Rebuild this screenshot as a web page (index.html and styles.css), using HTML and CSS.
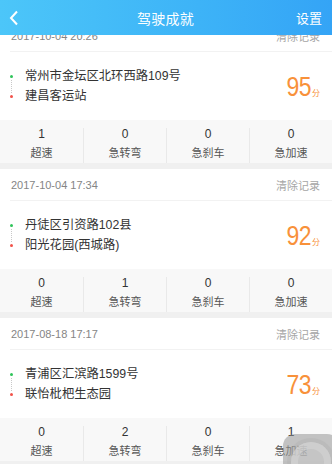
FILE: index.html
```html
<!DOCTYPE html>
<html lang="zh">
<head>
<meta charset="utf-8">
<title>驾驶成就</title>
<link rel="stylesheet" href="styles.css">
</head>
<body>
<div class="app">
  <header class="nav">
    <span class="back">
      <svg width="10" height="16" viewBox="0 0 10 16"><path d="M8 1.5 L2 8 L8 14.5" fill="none" stroke="#fff" stroke-width="2"/></svg>
    </span>
    <span class="title">驾驶成就</span>
    <span class="setting">设置</span>
  </header>
  <div class="list">
    <section class="card">
      <div class="card-head"><span class="date">2017-10-04 20:26</span><span class="clear">清除记录</span></div>
      <div class="route">
        <div class="marks"><i class="dot start"></i><i class="dash"></i><i class="dot end"></i></div>
        <div class="places"><div>常州市金坛区北环西路109号</div><div>建昌客运站</div></div>
        <div class="score"><span class="val">95</span><span class="unit">分</span></div>
      </div>
      <div class="stats">
        <div class="stat"><span class="num">1</span><span class="lbl">超速</span></div>
        <div class="stat"><span class="num">0</span><span class="lbl">急转弯</span></div>
        <div class="stat"><span class="num">0</span><span class="lbl">急刹车</span></div>
        <div class="stat"><span class="num">0</span><span class="lbl">急加速</span></div>
      </div>
    </section>
    <section class="card">
      <div class="card-head"><span class="date">2017-10-04 17:34</span><span class="clear">清除记录</span></div>
      <div class="route">
        <div class="marks"><i class="dot start"></i><i class="dash"></i><i class="dot end"></i></div>
        <div class="places"><div>丹徒区引资路102县</div><div>阳光花园(西城路)</div></div>
        <div class="score"><span class="val">92</span><span class="unit">分</span></div>
      </div>
      <div class="stats">
        <div class="stat"><span class="num">0</span><span class="lbl">超速</span></div>
        <div class="stat"><span class="num">1</span><span class="lbl">急转弯</span></div>
        <div class="stat"><span class="num">0</span><span class="lbl">急刹车</span></div>
        <div class="stat"><span class="num">0</span><span class="lbl">急加速</span></div>
      </div>
    </section>
    <section class="card">
      <div class="card-head"><span class="date">2017-08-18 17:17</span><span class="clear">清除记录</span></div>
      <div class="route">
        <div class="marks"><i class="dot start"></i><i class="dash"></i><i class="dot end"></i></div>
        <div class="places"><div>青浦区汇滨路1599号</div><div>联怡枇杷生态园</div></div>
        <div class="score"><span class="val">73</span><span class="unit">分</span></div>
      </div>
      <div class="stats">
        <div class="stat"><span class="num">0</span><span class="lbl">超速</span></div>
        <div class="stat"><span class="num">2</span><span class="lbl">急转弯</span></div>
        <div class="stat"><span class="num">0</span><span class="lbl">急刹车</span></div>
        <div class="stat"><span class="num">1</span><span class="lbl">急加速</span></div>
      </div>
    </section>
  </div>
  <div class="assist"><span class="ring"></span></div>
</div>
</body>
</html>
```
FILE: styles.css
```css
html, body {
  margin: 0;
  padding: 0;
}
body {
  font-family: "Liberation Sans", "Noto Sans CJK SC", sans-serif;
  background: #f0f0f0;
}
.app {
  position: relative;
  width: 332px;
  height: 464px;
  overflow: hidden;
  background: #f0f0f0;
}
.nav {
  position: relative;
  z-index: 2;
  height: 35px;
  display: flex;
  align-items: center;
  justify-content: space-between;
  padding: 0 10px 0 9px;
  background: linear-gradient(90deg, #4cc6f9 0%, #3db3f7 60%, #34a4f6 100%);
  color: #fff;
}
.back {
  width: 40px;
  display: flex;
  align-items: center;
  height: 16px;
}
.title {
  font-size: 14px;
  letter-spacing: 0.3px;
}
.setting {
  width: 40px;
  text-align: right;
  font-size: 13px;
}
.list {
  margin-top: -15px;
}
.card {
  background: #fff;
  margin-bottom: 6px;
}
.card-head {
  height: 31px;
  margin-left: 10px;
  padding: 0 12px 0 1px;
  display: flex;
  align-items: center;
  justify-content: space-between;
  border-bottom: 1px solid #f2f2f2;
}
.date {
  font-size: 11px;
  color: #858585;
}
.clear {
  font-size: 11px;
  color: #a6a6a6;
  font-family: "Noto Sans CJK SC", sans-serif;
}
.route {
  height: 68px;
  display: flex;
  align-items: center;
  padding: 0 12px 0 10px;
}
.marks {
  width: 3px;
  display: flex;
  flex-direction: column;
  align-items: center;
  margin-right: 12px;
}
.dot {
  display: block;
  width: 3px;
  height: 3px;
  border-radius: 50%;
}
.dot.start { background: #2fc45a; }
.dot.end { background: #f2524a; }
.dash {
  display: block;
  height: 13px;
  margin: 2px 0;
  border-left: 1px dotted #c8c8c8;
}
.places {
  flex: 1;
  font-size: 12.3px;
  line-height: 20px;
  color: #333;
}
.score {
  display: flex;
  align-items: baseline;
  color: #f8913a;
  margin-top: 2px;
}
.val {
  display: inline-block;
  font-family: "Liberation Sans Narrow", "Liberation Sans", sans-serif;
  font-size: 28px;
  letter-spacing: -0.5px;
  transform: scaleX(0.82);
  transform-origin: right center;
}
.unit {
  font-family: "Noto Sans CJK SC", sans-serif;
  font-size: 8px;
  margin-left: 1px;
}
.stats {
  height: 43px;
  box-sizing: border-box;
  padding: 8px 0 6px;
  display: grid;
  grid-template-columns: repeat(4, 1fr);
  background: #f8f8f8;
}
.stat {
  display: flex;
  flex-direction: column;
  align-items: center;
  justify-content: flex-start;
}
.stat + .stat {
  border-left: 1px solid #e9e9e9;
}
.num {
  margin-top: -1px;
  font-size: 12px;
  line-height: 14px;
  color: #333;
}
.lbl {
  font-family: "Noto Sans CJK SC", sans-serif;
  font-size: 11px;
  line-height: 22px;
  color: #555;
}
.assist {
  position: absolute;
  left: 283px;
  top: 434px;
  width: 56px;
  height: 56px;
  border-radius: 12px;
  background: rgba(150, 150, 150, 0.55);
  display: flex;
  align-items: center;
  justify-content: center;
}
.ring {
  width: 40px;
  height: 40px;
  border-radius: 50%;
  background: rgba(200, 200, 200, 0.55);
  box-shadow: 0 0 0 4px rgba(175, 175, 175, 0.35), inset 0 0 0 7px rgba(215, 215, 215, 0.5);
}
```
